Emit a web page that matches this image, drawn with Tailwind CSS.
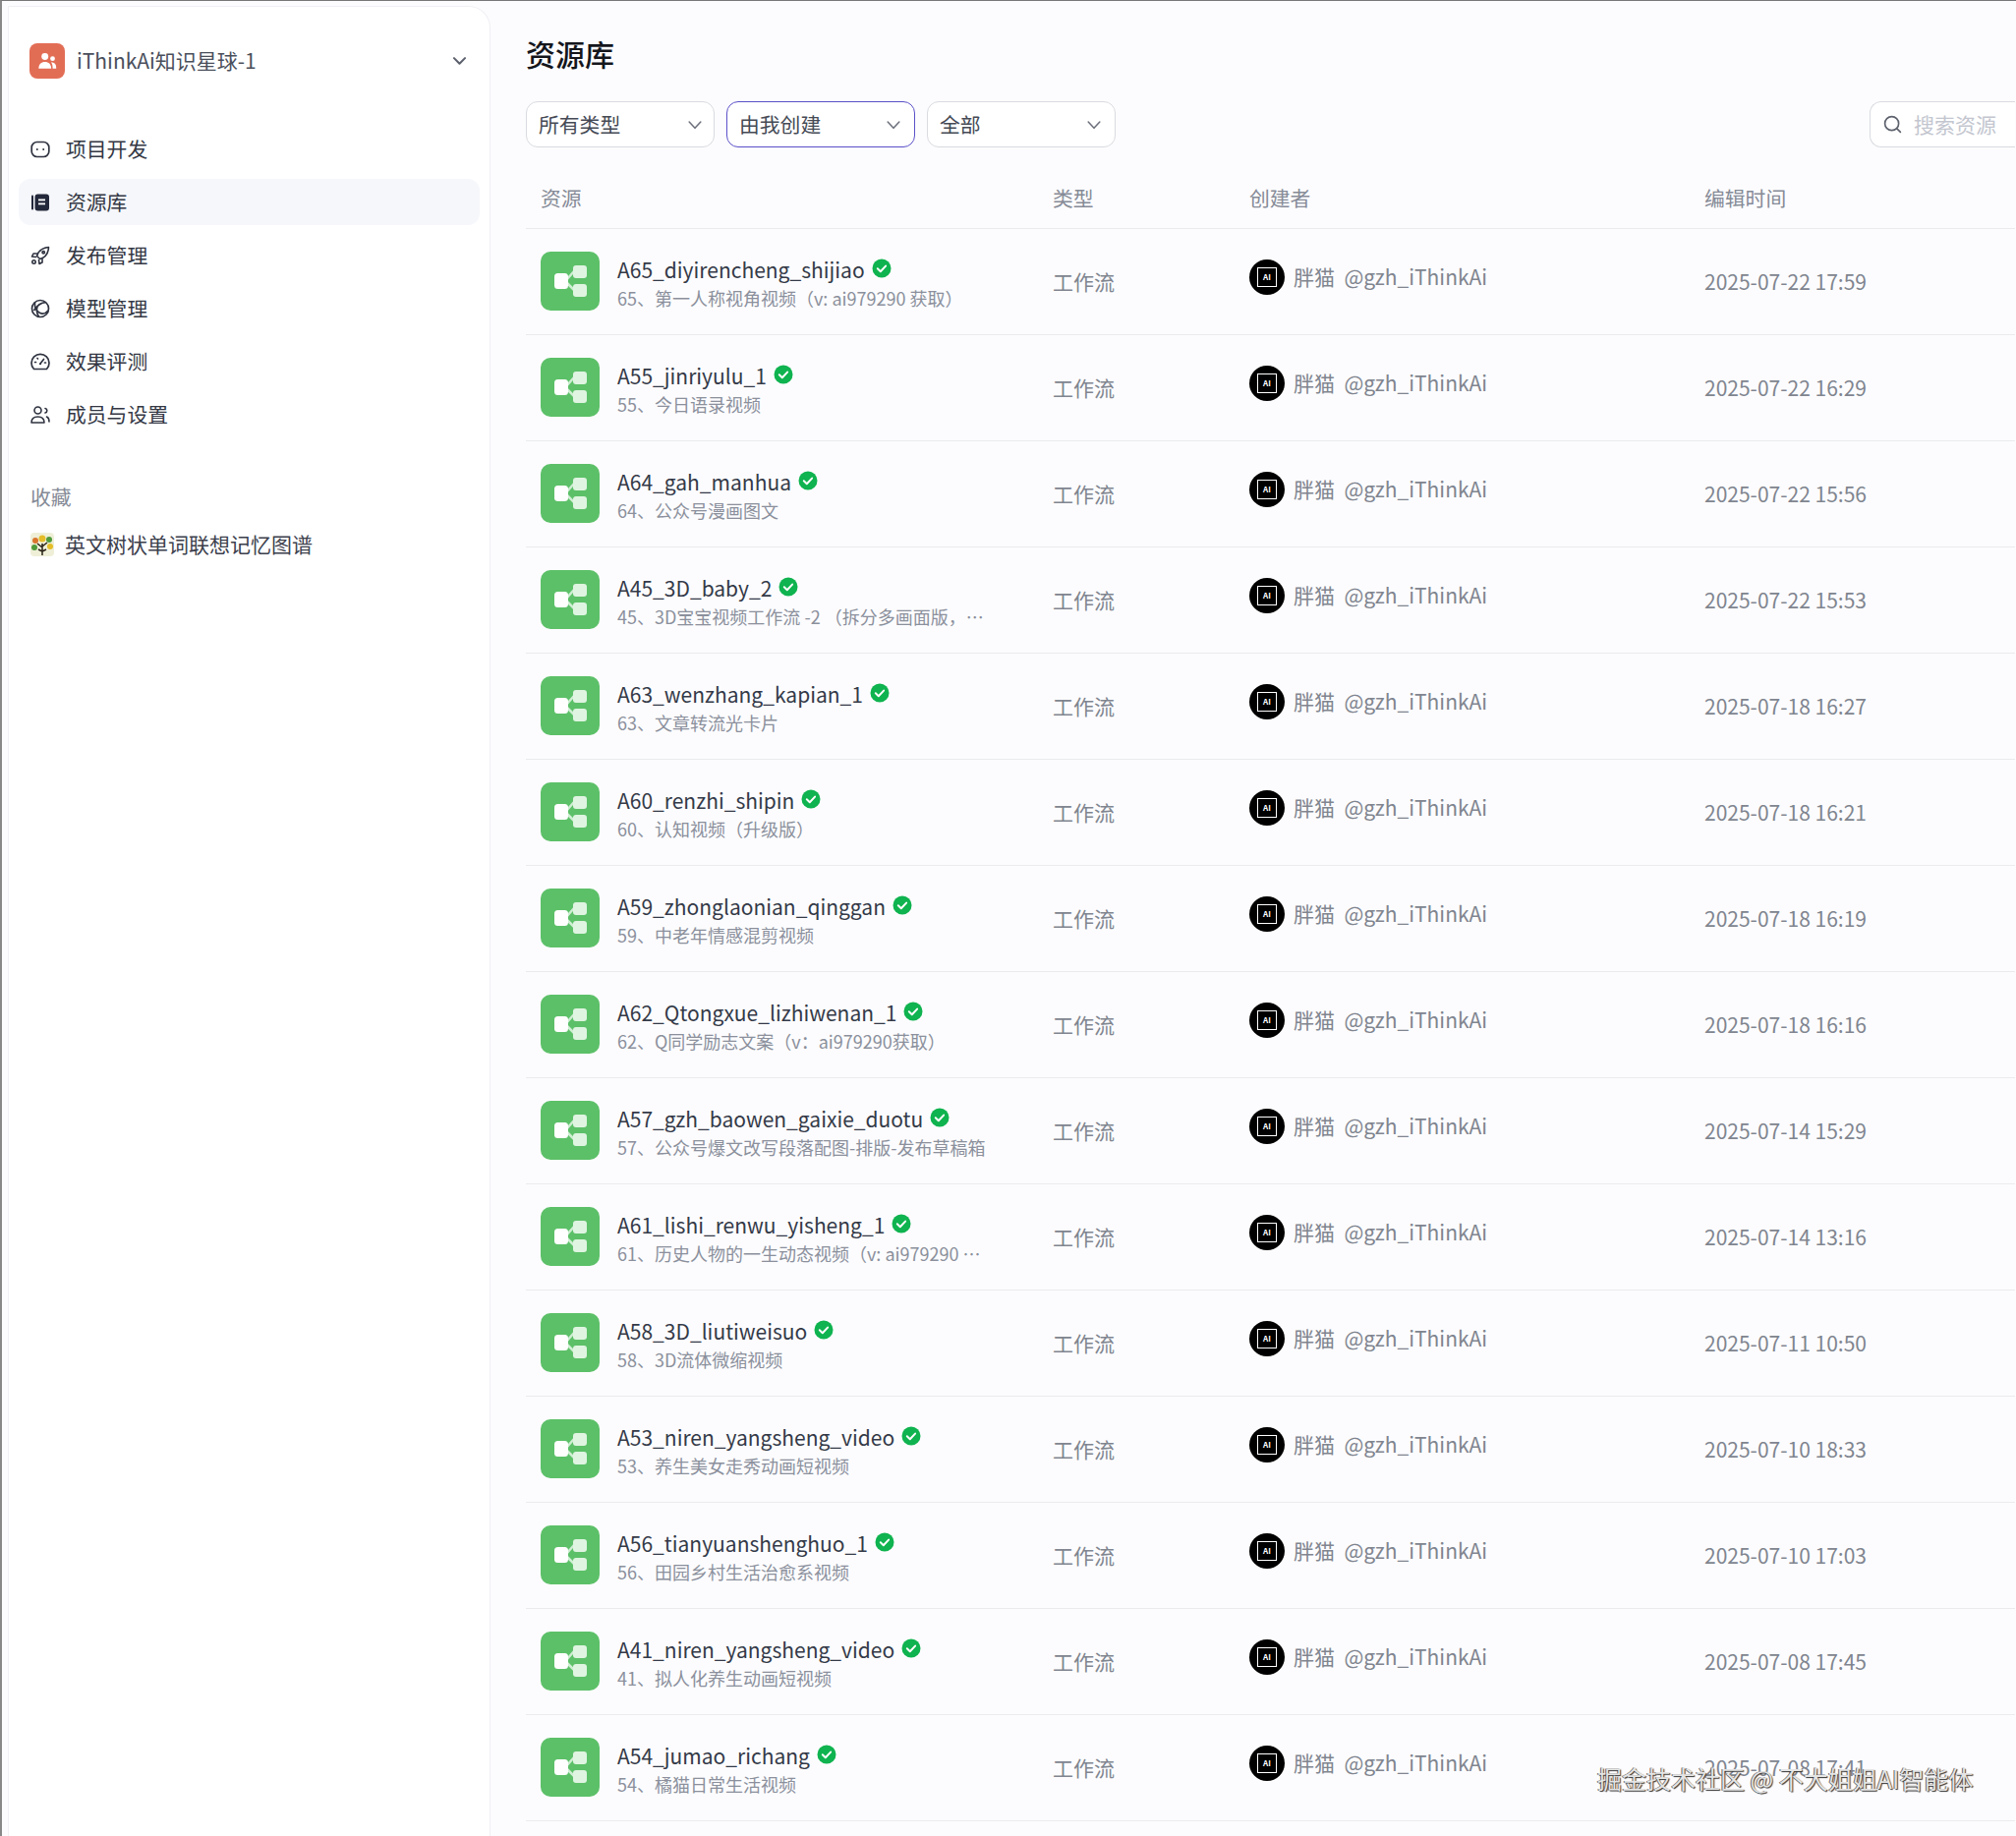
<!DOCTYPE html>
<html lang="zh-CN">
<head>
<meta charset="utf-8">
<title>资源库</title>
<script src="https://cdn.jsdelivr.net/npm/@tailwindcss/browser@4"></script>
</head>
<body class="m-0 bg-[#fcfcfe] font-['Noto_Sans_CJK_SC','Noto_Sans',sans-serif]">
<div class="flex h-[1868px] w-[2051px] overflow-hidden border-t-[1px] border-l-[2px] border-t-[#777] border-l-[#888] pl-[6px] pt-[5px]">
  <aside class="flex h-[1900px] w-[491px] shrink-0 flex-col rounded-tr-[22px] border-x border-t border-[#f0f0f5] bg-white">
    <div class="mt-[37px] flex h-[36px] items-center pl-[21px] pr-[21px]">
      <span class="flex h-[36px] w-[36px] items-center justify-center rounded-[8px] bg-[#e26d55]">
        <svg viewBox="0 0 24 24" class="h-[22px] w-[22px]" fill="#fff"><circle cx="9.5" cy="7" r="3.8"/><path d="M2.5 20.5c0-4.6 2.8-7.5 7-7.5s7 2.900 7 7.500z"/><circle cx="18" cy="9.500" r="2.600"/><path d="M17.800 13.500c2.500.1 4.200 2.300 4.200 5.500v1.500h-3.900c0-2.800-.2-5-1.800-6.800z"/></svg>
      </span>
      <span class="ml-[12px] mt-[-2px] text-[21px] leading-none text-[#4a4f5c]">iThinkAi知识星球-1</span>
      <svg viewBox="0 0 24 24" class="ml-auto mt-[-2px] h-[19px] w-[19px]" fill="none" stroke="#5b606c" stroke-width="2.600" stroke-linecap="round" stroke-linejoin="round"><path d="M5 9l7 7 7-7"/></svg>
    </div>
    <nav class="mt-[48px] flex flex-col px-[10px] text-[20.8px] leading-none text-[#343844]">
      <a class="flex h-[47px] items-center gap-[16px] rounded-[12px] pl-[12px]">
        <svg viewBox="0 0 20 20" class="h-[20px] w-[20px]" fill="none" stroke="#2f3340" stroke-width="1.700"><rect x="1.200" y="2.500" width="17.600" height="15" rx="5.500"/><circle cx="6.800" cy="10" r="1" fill="#2f3340" stroke="none"/><circle cx="13.200" cy="10" r="1" fill="#2f3340" stroke="none"/></svg>
        <span>项目开发</span>
      </a>
      <a class="mt-[7px] flex h-[47px] items-center gap-[16px] rounded-[12px] bg-[#f6f7fb] pl-[12px]">
        <svg viewBox="0 0 20 20" class="h-[20px] w-[20px]"><rect x="1" y="2.500" width="2" height="15" rx="1" fill="#23283a"/><rect x="4.500" y="1.500" width="14.500" height="17" rx="3" fill="#23283a"/><rect x="8" y="6.500" width="7" height="1.800" fill="#fff"/><rect x="8" y="10.500" width="7" height="1.800" fill="#fff"/></svg>
        <span>资源库</span>
      </a>
      <a class="mt-[7px] flex h-[47px] items-center gap-[16px] rounded-[12px] pl-[12px]">
        <svg viewBox="0 0 20 20" class="h-[20px] w-[20px]" fill="none" stroke="#2f3340" stroke-width="1.600" stroke-linejoin="round" stroke-linecap="round"><path d="M6.500 10.500C8 5.500 12.500 2 18.500 1.500c-.3 6-3.800 10.500-8.800 12z"/><path d="M6.500 8H3L1.500 11l4 .5"/><path d="M12 13.500V17l-3 1.500-.5-4"/><circle cx="13.200" cy="6.800" r="1.200"/><circle cx="3.500" cy="16.500" r="1.700"/></svg>
        <span>发布管理</span>
      </a>
      <a class="mt-[7px] flex h-[47px] items-center gap-[16px] rounded-[12px] pl-[12px]">
        <svg viewBox="0 0 20 20" class="h-[20px] w-[20px]" fill="none" stroke="#2f3340" stroke-width="1.700"><circle cx="10" cy="10" r="8.500"/><path d="M4.500 3.800C4 8 6 12 9 14c3 1.800 6.500 1 9-2"/><path d="M15.500 3.600C11 3.800 6.500 7 3.500 12"/><path d="M8.500 18.400C6.500 15 6 11 7 8"/></svg>
        <span>模型管理</span>
      </a>
      <a class="mt-[7px] flex h-[47px] items-center gap-[16px] rounded-[12px] pl-[12px]">
        <svg viewBox="0 0 20 20" class="h-[20px] w-[20px]" fill="none" stroke="#2f3340" stroke-width="1.700" stroke-linecap="round"><path d="M3.500 17.500A9 9 0 1 1 16.500 17.500z" stroke-linejoin="round"/><path d="M10 12l3.500-4.500"/><circle cx="10" cy="12.300" r="1" fill="#2f3340" stroke="none"/><path d="M4.500 10.500h1M14.500 11h1M7 6.500l.5.500"/></svg>
        <span>效果评测</span>
      </a>
      <a class="mt-[7px] flex h-[47px] items-center gap-[16px] rounded-[12px] pl-[12px]">
        <svg viewBox="0 0 20 20" class="h-[20px] w-[20px]" fill="none" stroke="#2f3340" stroke-width="1.600" stroke-linecap="round" stroke-linejoin="round"><circle cx="7.500" cy="5.500" r="3.500"/><path d="M1 18c0-4 2.500-6 6.500-6s6.500 2 6.500 6z"/><path d="M15 3.500a2.300 2.300 0 0 1 0 4.500"/><path d="M16.500 12c1.600.7 2.500 2.500 2.500 5"/></svg>
        <span>成员与设置</span>
      </a>
    </nav>
    <div class="mt-[50px] pl-[22px] text-[20.8px] leading-none text-[#858a96]">收藏</div>
    <div class="mt-[26px] flex h-[24px] items-center pl-[22px] text-[21px] leading-none text-[#3c404c]">
      <svg viewBox="0 0 24 24" class="h-[24px] w-[24px] rounded-[4px] bg-[#efefd8]"><path d="M12 23V11M12 15l-5-4M12 14l5-4M12 19l-4-2M12 19l4-2" stroke="#2b2418" stroke-width="1.500" fill="none"/><circle cx="12" cy="6" r="3.500" fill="#e4bd28"/><circle cx="5" cy="8" r="3" fill="#d9752c"/><circle cx="19" cy="7" r="3" fill="#4f9a3a"/><circle cx="4" cy="15" r="3" fill="#4f9a3a"/><circle cx="20" cy="14" r="3" fill="#e4bd28"/></svg>
      <span class="ml-[11px]">英文树状单词联想记忆图谱</span>
    </div>
  </aside>

  <main class="w-[1560px] shrink-0 pl-[36px]">
    <h1 class="mt-[25px] text-[30px] leading-[46px] font-medium text-[#14161c]">资源库</h1>
    <div class="mt-[26px] flex h-[47px] w-[1515px] gap-[12px] text-[20.8px] leading-none text-[#454a55]">
      <div class="flex w-[192px] items-center justify-between rounded-[12px] border border-[#d9dbe0] bg-white pl-[12px] pr-[9px]">
        <span>所有类型</span>
        <svg viewBox="0 0 24 24" class="h-[20px] w-[20px]" fill="none" stroke="#6b6f7a" stroke-width="1.800" stroke-linecap="round" stroke-linejoin="round"><path d="M5 8.500l7 7.500 7-7.500"/></svg>
      </div>
      <div class="flex w-[192px] items-center justify-between rounded-[12px] border border-[#5a50c8] bg-white pl-[12px] pr-[11px]">
        <span>由我创建</span>
        <svg viewBox="0 0 24 24" class="h-[20px] w-[20px]" fill="none" stroke="#6b6f7a" stroke-width="1.800" stroke-linecap="round" stroke-linejoin="round"><path d="M5 8.500l7 7.500 7-7.500"/></svg>
      </div>
      <div class="flex w-[192px] items-center justify-between rounded-[12px] border border-[#d9dbe0] bg-white pl-[12px] pr-[11px]">
        <span>全部</span>
        <svg viewBox="0 0 24 24" class="h-[20px] w-[20px]" fill="none" stroke="#6b6f7a" stroke-width="1.800" stroke-linecap="round" stroke-linejoin="round"><path d="M5 8.500l7 7.500 7-7.500"/></svg>
      </div>
      <div class="ml-auto flex w-[148px] items-center gap-[11px] rounded-l-[12px] border border-r-0 border-[#d9dbe0] bg-white pl-[12px]">
        <svg viewBox="0 0 24 24" class="h-[21px] w-[21px]" fill="none" stroke="#5e626d" stroke-width="1.900" stroke-linecap="round"><circle cx="11" cy="11" r="8"/><path d="M17 17l4 4"/></svg>
        <span class="text-[21px] text-[#c3c6cf]">搜索资源</span>
      </div>
    </div>
    <div class="w-[1515px]">
      <div class="mt-[19px] grid h-[64px] grid-cols-[536px_200px_463px_316px] items-center border-b border-[#eaebee] pt-[2px] text-[20.8px] leading-none text-[#868b97]">
        <div class="pl-[15px]">资源</div><div>类型</div><div>创建者</div><div>编辑时间</div>
      </div>
      <div id="rows"></div>
    </div>
  </main>
</div>
<div class="absolute left-[1625px] top-[1794px] whitespace-nowrap text-[25px] leading-[30px] text-[#e4e4e4] [text-shadow:1px_1px_1px_#333,-1px_0_0_#666]">掘金技术社区 @ 不大姐姐AI智能体</div>
<script>
const data = [
["A65_diyirencheng_shijiao","65、第一人称视角视频（v: ai979290 获取）","2025-07-22 17:59"],
["A55_jinriyulu_1","55、今日语录视频","2025-07-22 16:29"],
["A64_gah_manhua","64、公众号漫画图文","2025-07-22 15:56"],
["A45_3D_baby_2","45、3D宝宝视频工作流 -2 （拆分多画面版，适合长视频、多场景内容）","2025-07-22 15:53"],
["A63_wenzhang_kapian_1","63、文章转流光卡片","2025-07-18 16:27"],
["A60_renzhi_shipin","60、认知视频（升级版）","2025-07-18 16:21"],
["A59_zhonglaonian_qinggan","59、中老年情感混剪视频","2025-07-18 16:19"],
["A62_Qtongxue_lizhiwenan_1","62、Q同学励志文案（v：ai979290获取）","2025-07-18 16:16"],
["A57_gzh_baowen_gaixie_duotu","57、公众号爆文改写段落配图-排版-发布草稿箱","2025-07-14 15:29"],
["A61_lishi_renwu_yisheng_1","61、历史人物的一生动态视频（v: ai979290 获取完整版本）","2025-07-14 13:16"],
["A58_3D_liutiweisuo","58、3D流体微缩视频","2025-07-11 10:50"],
["A53_niren_yangsheng_video","53、养生美女走秀动画短视频","2025-07-10 18:33"],
["A56_tianyuanshenghuo_1","56、田园乡村生活治愈系视频","2025-07-10 17:03"],
["A41_niren_yangsheng_video","41、拟人化养生动画短视频","2025-07-08 17:45"],
["A54_jumao_richang","54、橘猫日常生活视频","2025-07-08 17:41"]
];
document.getElementById("rows").innerHTML = data.map(([name, sub, time]) => `
<div class="grid h-[108px] grid-cols-[536px_200px_463px_316px] items-center border-b border-[#eaebee]">
  <div class="flex items-center pl-[15px]">
    <span class="relative mt-[-2px] h-[60px] w-[60px] shrink-0 rounded-[10px] bg-[#5cc068]">
      <svg viewBox="0 0 60 60" class="h-[60px] w-[60px]"><path d="M27 28l7-8M27 32l7 7" stroke="#cfeed3" stroke-width="2.500" fill="none"/><rect x="14" y="22" width="14" height="16" rx="3.500" fill="#fff"/><rect x="33" y="14" width="14" height="13" rx="3" fill="#dff4e1"/><rect x="33" y="33" width="14" height="13" rx="3" fill="#dff4e1"/></svg>
    </span>
    <div class="ml-[18px] mt-[3px] min-w-0">
      <div class="flex h-[30px] items-center">
        <span class="text-[21px] leading-none text-[#343a48]">${name}</span>
        <svg viewBox="0 0 20 20" class="ml-[7px] mt-[-2px] h-[20px] w-[20px]"><circle cx="10" cy="10" r="9.500" fill="#0fb34f"/><path d="M5.800 10.300l3 2.900 5.300-5.600" fill="none" stroke="#fff" stroke-width="2" stroke-linecap="round" stroke-linejoin="round"/></svg>
      </div>
      <div class="w-[378px] truncate text-[18px] leading-[28px] text-[#8b909c]">${sub}</div>
    </div>
  </div>
  <div class="text-[21px] leading-none text-[#80858f]">工作流</div>
  <div class="mt-[-10px] flex items-center">
    <span class="flex h-[36px] w-[36px] shrink-0 items-center justify-center rounded-full bg-black">
      <span class="flex h-[20px] w-[20px] items-center justify-center border-[1.500px] border-white text-[8px] leading-none font-bold text-white">AI</span>
    </span>
    <span class="ml-[9px] whitespace-pre text-[21px] leading-none text-[#80858f]">胖猫  @gzh_iThinkAi</span>
  </div>
  <div class="text-[21px] leading-none text-[#80858f]">${time}</div>
</div>`).join("");
</script>
</body>
</html>
